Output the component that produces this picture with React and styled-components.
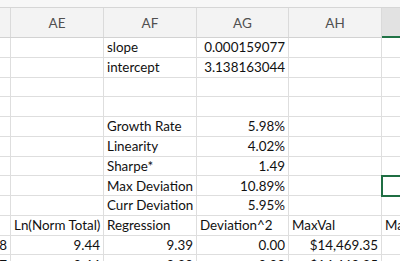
import React from "react";
import styled, { createGlobalStyle } from "styled-components";

const Global = createGlobalStyle`
  html, body { margin: 0; padding: 0; background: #fff; }
  body { width: 400px; height: 261px; overflow: hidden; }
`;

const COLS = [11, 93, 93, 92, 93, 40];
const ROW_H = 19.75;

const Sheet = styled.div`
  width: 400px;
  height: 261px;
  overflow: hidden;
  display: flex;
  flex-direction: column;
  font-family: Lato, "Liberation Sans", sans-serif;
  font-size: 13.4px;
  color: #111;
`;

const TopStrip = styled.div`
  height: 7px;
  flex: none;
  background: #f7f7f7;
  border-bottom: 1px solid #d6d6d6;
`;

const HeaderRow = styled.div`
  display: flex;
  flex: none;
  height: 30px;
  box-sizing: border-box;
  border-bottom: 1px solid #d2d2d2;
  background: #f3f3f3;
`;

const HeaderCell = styled.div`
  flex: none;
  width: ${(p) => p.$w}px;
  box-sizing: border-box;
  border-right: 1px solid #dadada;
  display: flex;
  align-items: center;
  justify-content: center;
  font-size: 13.5px;
  color: #505050;
  background: ${(p) => (p.$active ? "#e2e2e2" : "transparent")};
  box-shadow: ${(p) => (p.$active ? "inset 0 -2px 0 #217346" : "none")};
  margin-bottom: ${(p) => (p.$active ? "-1px" : "0")};
`;

const Row = styled.div`
  display: flex;
  flex: none;
  height: ${ROW_H}px;
`;

const Cell = styled.div`
  flex: none;
  width: ${(p) => p.$w}px;
  box-sizing: border-box;
  border-right: 1px solid #dedede;
  border-bottom: 1px solid #dedede;
  display: flex;
  align-items: center;
  justify-content: ${(p) => (p.$num ? "flex-end" : "flex-start")};
  padding: ${(p) => (p.$num ? "0 3px 0 0" : "0 0 0 3px")};
  white-space: nowrap;
  overflow: visible;
  position: relative;
  outline: ${(p) => (p.$selected ? "2px solid #1f6e43" : "none")};
  outline-offset: -1px;
  z-index: ${(p) => (p.$selected ? 1 : 0)};
`;

const rows = [
  [null, null, { t: "slope" }, { t: "0.000159077", n: 1 }, null, null],
  [null, null, { t: "intercept" }, { t: "3.138163044", n: 1 }, null, null],
  [null, null, null, null, null, null],
  [null, null, null, null, null, null],
  [null, null, { t: "Growth Rate" }, { t: "5.98%", n: 1 }, null, null],
  [null, null, { t: "Linearity" }, { t: "4.02%", n: 1 }, null, null],
  [null, null, { t: "Sharpe*" }, { t: "1.49", n: 1 }, null, null],
  [null, null, { t: "Max Deviation" }, { t: "10.89%", n: 1 }, null, { sel: 1 }],
  [null, null, { t: "Curr Deviation" }, { t: "5.95%", n: 1 }, null, null],
  [null, { t: "Ln(Norm Total)" }, { t: "Regression" }, { t: "Deviation^2" }, { t: "MaxVal" }, { t: "Ma" }],
  [{ t: "8", n: 1 }, { t: "9.44", n: 1 }, { t: "9.39", n: 1 }, { t: "0.00", n: 1 }, { t: "$14,469.35", n: 1 }, null],
  [{ t: "7", n: 1 }, { t: "9.44", n: 1 }, { t: "9.39", n: 1 }, { t: "0.00", n: 1 }, { t: "$14,469.35", n: 1 }, null],
];

const headers = ["", "AE", "AF", "AG", "AH", ""];

export default function App() {
  return (
    <>
      <Global />
      <Sheet>
        <TopStrip />
        <HeaderRow>
          {headers.map((h, i) => (
            <HeaderCell key={i} $w={COLS[i]} $active={i === 5}>
              {h}
            </HeaderCell>
          ))}
        </HeaderRow>
        {rows.map((r, ri) => (
          <Row key={ri}>
            {r.map((c, ci) => (
              <Cell
                key={ci}
                $w={COLS[ci]}
                $num={c && c.n}
                $selected={c && c.sel}
              >
                {c && c.t}
              </Cell>
            ))}
          </Row>
        ))}
      </Sheet>
    </>
  );
}
